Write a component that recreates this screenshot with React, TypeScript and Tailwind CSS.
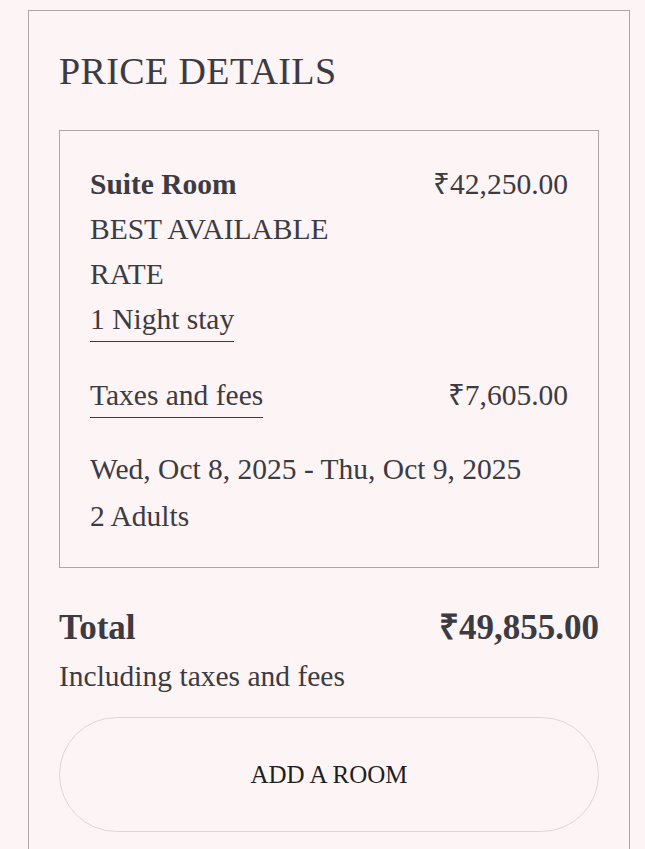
export default function App() {
    return (
        <div className="min-h-screen bg-[#fdf4f6] pt-[10px] font-['Liberation_Serif',serif] text-[#3c3b42]">
            <div className="ml-[28px] w-[602px] min-h-[860px] border border-[#aba6a8] px-[30px] pt-[32px]">
                <h2 className="text-[38px] leading-[56px] uppercase tracking-[0.01em]">Price Details</h2>

                {/* Room summary */}
                <div className="mt-[31px] border border-[#aba6a8] px-[30px] pt-[31px] pb-[28px] text-[29.5px] leading-[45px]">
                    <div className="flex items-start justify-between">
                        <div className="w-[280px]">
                            <div className="font-bold">Suite Room</div>
                            <div>BEST AVAILABLE RATE</div>
                            <span className="border-b border-[#3c3b42] pb-[6px]">1 Night stay</span>
                        </div>
                        <div>₹42,250.00</div>
                    </div>
                    <div className="mt-[31px] flex items-start justify-between">
                        <div>
                            <span className="border-b border-[#3c3b42] pb-[6px]">Taxes and fees</span>
                        </div>
                        <span>₹7,605.00</span>
                    </div>
                    <div className="mt-[29px]">Wed, Oct 8, 2025 - Thu, Oct 9, 2025</div>
                    <div className="mt-[2px]">2 Adults</div>
                </div>

                {/* Total */}
                <div className="mt-[36px] flex items-center justify-between text-[35px] font-bold leading-[48px]">
                    <span>Total</span>
                    <span>₹49,855.00</span>
                </div>
                <p className="mt-[2px] text-[29.5px] leading-[45px]">Including taxes and fees</p>

                <button className="mt-[18px] h-[115px] w-full rounded-full border border-[#dcd8da] text-[25px] uppercase text-[#1f1e22]">
                    Add a room
                </button>
            </div>
        </div>
    );
}
